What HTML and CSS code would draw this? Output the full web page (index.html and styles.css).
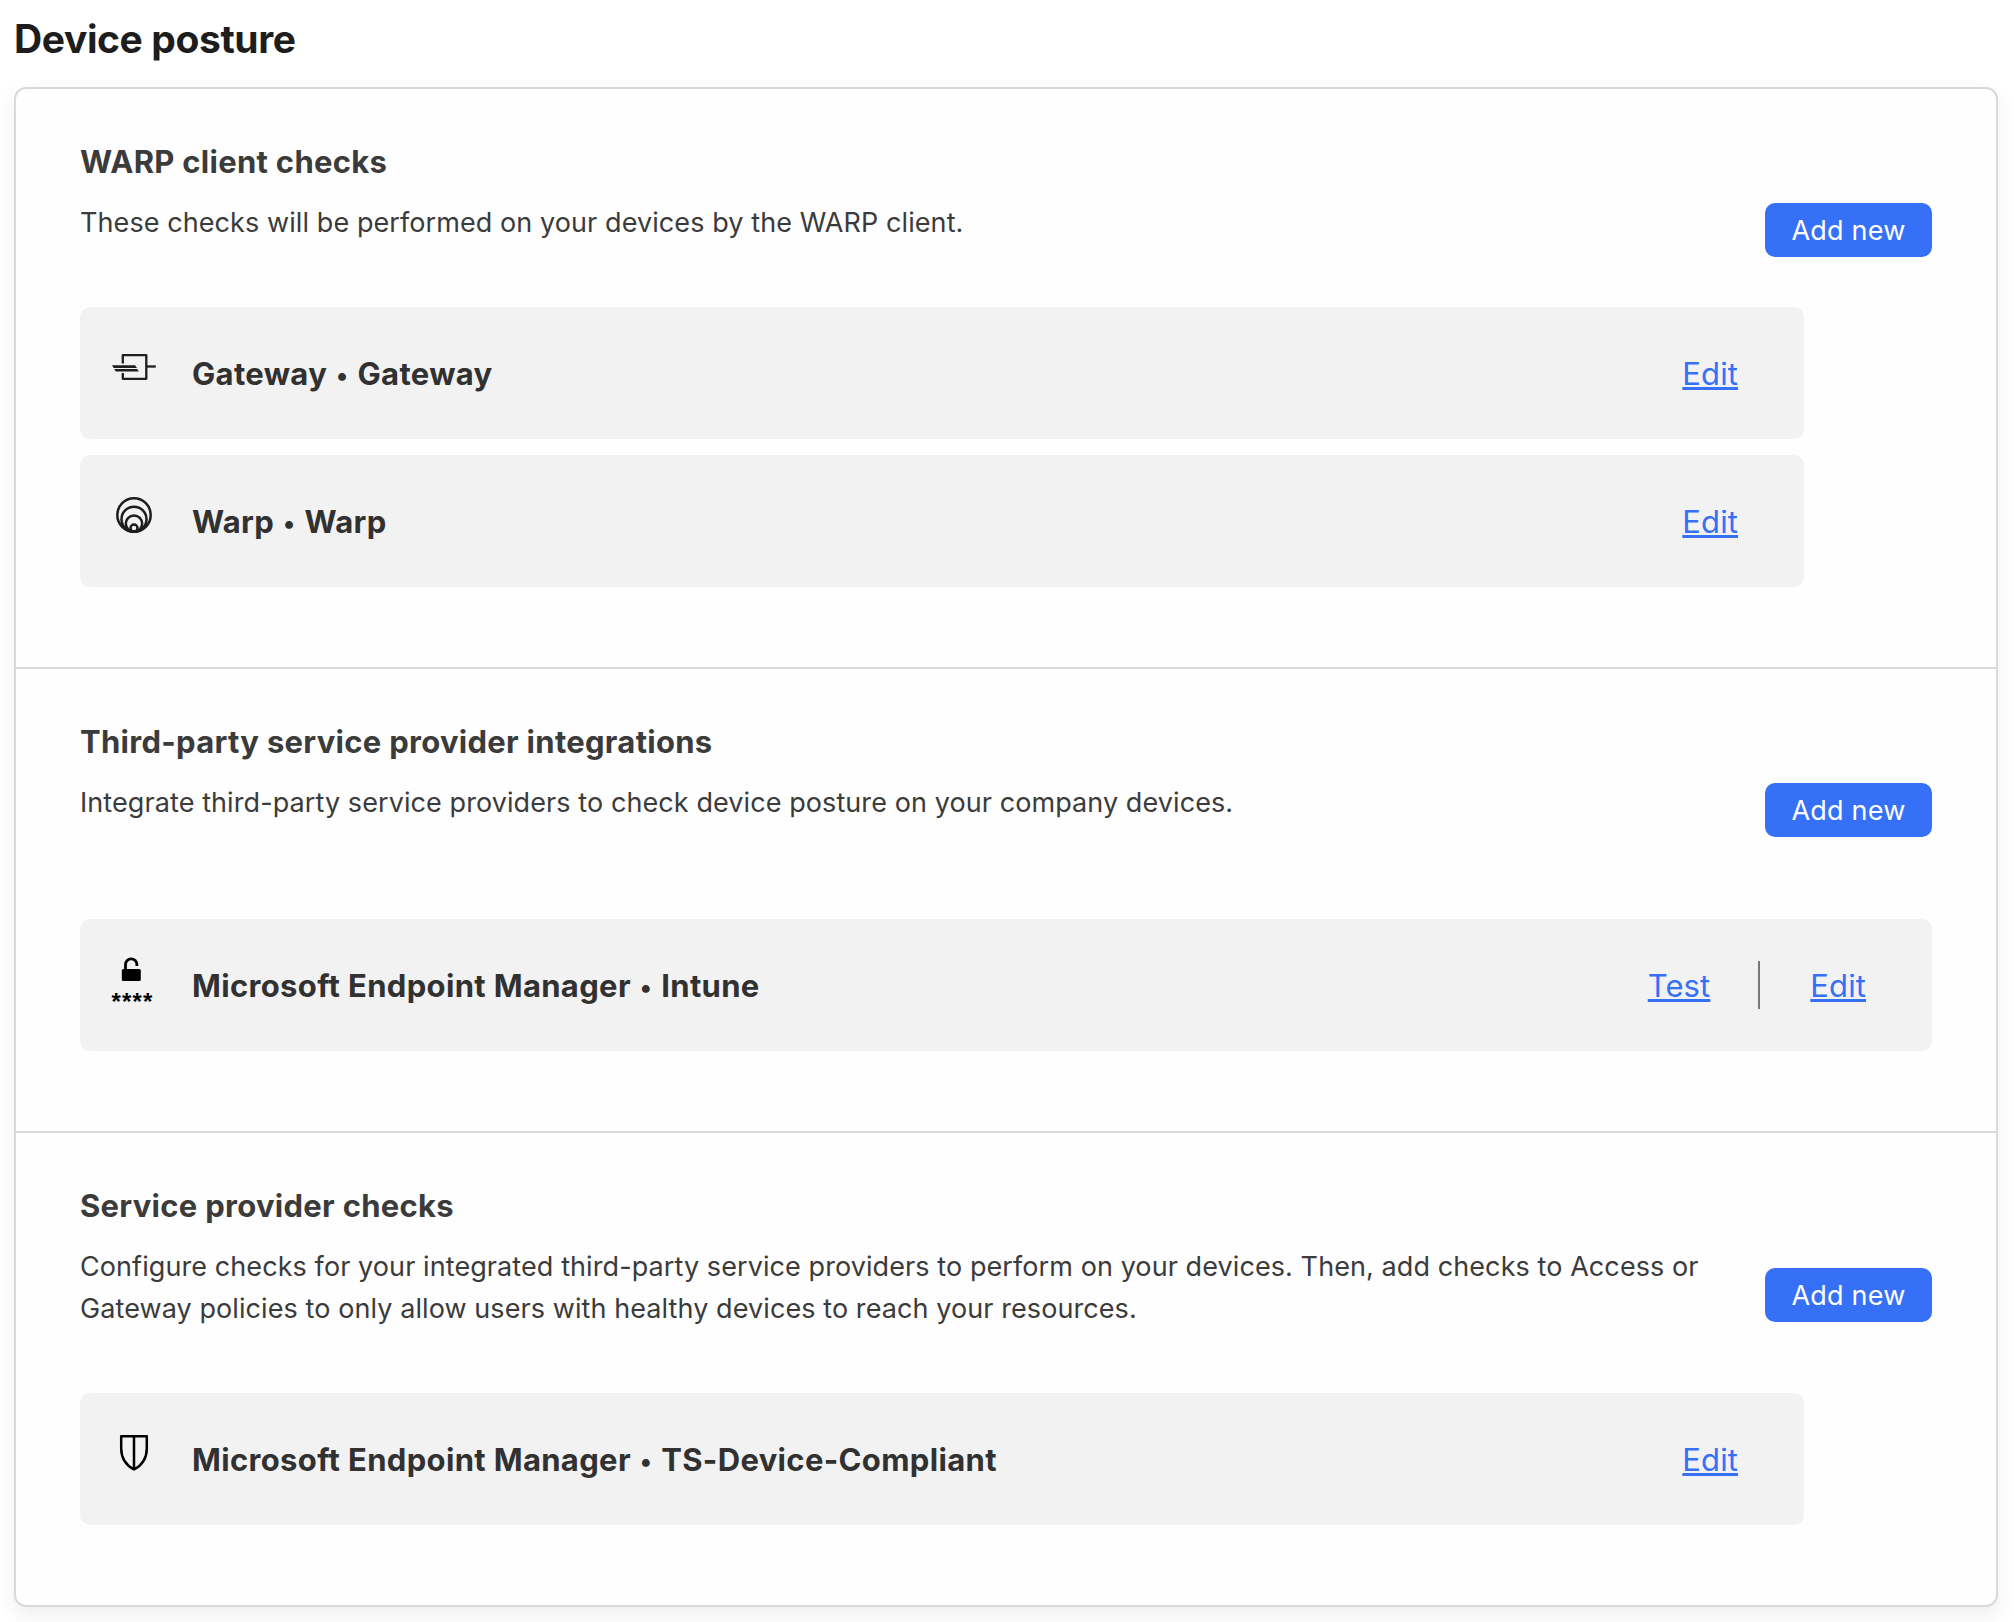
FILE: index.html
```html
<!DOCTYPE html>
<html lang="en">
<head>
<meta charset="utf-8">
<title>Device posture</title>
<link rel="stylesheet" href="styles.css">
</head>
<body>
<main class="page">
  <h1 class="page-title">Device posture</h1>
  <div class="card">
    <section class="section">
      <h2 class="section-title">WARP client checks</h2>
      <div class="intro">
        <p class="desc">These checks will be performed on your devices by the WARP client.</p>
        <button class="btn">Add new</button>
      </div>
      <ul class="rows">
        <li class="row">
          <svg class="icon" width="48" height="48" viewBox="0 0 48 48" fill="none" stroke="#1d1d1d" stroke-width="2.3">
            <path d="M12.800 20.500V12.100H36.300V35.800H12.800V30" stroke-linejoin="round"/>
            <path d="M36.500 23.500H45.800"/>
            <path d="M2 22.300H25l2 2.700H3.600zM4.200 26H27.200l1.600 2.600H5.800z" fill="#1d1d1d" stroke="none"/>
          </svg>
          <h3 class="row-title">Gateway <span class="dot">•</span> Gateway</h3>
          <a class="link" href="#">Edit</a>
        </li>
        <li class="row">
          <svg class="icon" width="48" height="48" viewBox="0 0 48 48" fill="none" stroke="#1d1d1d" stroke-width="2.500">
            <circle cx="24" cy="24" r="16.700"/>
            <circle cx="24" cy="28.300" r="12.500"/>
            <circle cx="24" cy="32.600" r="8.200"/>
            <circle cx="24" cy="37" r="3.500"/>
            <path d="M12 33Q15.500 39 21 40.500L17 39Q13 37 12 33zM36 33Q32.500 39 27 40.500L31 39Q35 37 36 33z" stroke-width="1.500"/>
          </svg>
          <h3 class="row-title">Warp <span class="dot">•</span> Warp</h3>
          <a class="link" href="#">Edit</a>
        </li>
      </ul>
    </section>

    <section class="section">
      <h2 class="section-title">Third-party service provider integrations</h2>
      <div class="intro">
        <p class="desc">Integrate third-party service providers to check device posture on your company devices.</p>
        <button class="btn">Add new</button>
      </div>
      <ul class="rows rows-wide">
        <li class="row">
          <svg class="icon" width="48" height="48" viewBox="0 0 48 48">
            <path d="M15.500 15V9.500a5.700 5.700 0 0 1 11.400 0V11" fill="none" stroke="#000" stroke-width="2.800"/>
            <rect x="11.800" y="14" width="19" height="12" rx="1.500"/>
            <text class="stars" x="1.500" y="55">****</text>
          </svg>
          <h3 class="row-title">Microsoft Endpoint Manager <span class="dot">•</span> Intune</h3>
          <a class="link" href="#">Test</a>
          <span class="bar"></span>
          <a class="link" href="#">Edit</a>
        </li>
      </ul>
    </section>

    <section class="section">
      <h2 class="section-title">Service provider checks</h2>
      <div class="intro">
        <p class="desc">Configure checks for your integrated third-party service providers to perform on your devices. Then, add checks to Access or<br>Gateway policies to only allow users with healthy devices to reach your resources.</p>
        <button class="btn">Add new</button>
      </div>
      <ul class="rows">
        <li class="row">
          <svg class="icon" width="48" height="48" viewBox="0 0 48 48" fill="none" stroke="#000" stroke-width="2.500" stroke-linejoin="round">
            <path d="M11.200 7.300H36.800V19.500C36.800 29 31.500 36.500 24 40.500C16.500 36.500 11.200 29 11.200 19.500ZM24 7.300V40.500"/>
          </svg>
          <h3 class="row-title">Microsoft Endpoint Manager <span class="dot">•</span> TS-Device-Compliant</h3>
          <a class="link" href="#">Edit</a>
        </li>
      </ul>
    </section>
  </div>
</main>
</body>
</html>
```
FILE: styles.css
```css
* {
  box-sizing: border-box;
  margin: 0;
  padding: 0;
}

body {
  background: #fff;
  color: #3b3b3b;
  font-family: Inter, "Liberation Sans", sans-serif;
  overflow: hidden;
}

.page {
  padding: 15px 16px 15px 14px;
}

.page-title {
  height: 72px;
  color: #1d1d1d;
  font-size: 39px;
  font-weight: 700;
  letter-spacing: -0.4px;
  line-height: 48px;
}

.card {
  border: 2px solid #d9d9d9;
  border-radius: 12px;
  background: #fefefe;
  box-shadow: 0 8px 20px rgba(0, 20, 10, 0.07);
}

.section {
  padding: 49px 64px 80px;
}

.section + .section {
  border-top: 2px solid #d9d9d9;
}

.section-title {
  margin-bottom: 15px;
  font-size: 31px;
  font-weight: 700;
  letter-spacing: 0.29px;
  line-height: 48px;
}

.intro {
  display: flex;
  align-items: center;
  justify-content: space-between;
}

.desc {
  margin: 1px 0 -1px;
  font-size: 27px;
  letter-spacing: 0.084px;
  line-height: 42px;
  white-space: nowrap;
}

.btn {
  flex: none;
  width: 167px;
  height: 54px;
  margin: 1px 0 -14px;
  padding-top: 1px;
  border: 0;
  border-radius: 10px;
  background: #3670f7;
  color: #fff;
  font: 400 27px/53px Inter, "Liberation Sans", sans-serif;
  letter-spacing: 0.2px;
}

.rows {
  display: grid;
  gap: 16px;
  width: 1724px;
  margin-top: 64px;
  list-style: none;
}

.rows-wide {
  width: auto;
  margin-top: 96px;
}

.row {
  display: flex;
  align-items: center;
  height: 132px;
  padding: 0 66px 0 30px;
  border-radius: 10px;
  background: #f2f2f2;
}

.icon {
  flex: none;
  margin: 0 34px 12px 0;
  overflow: visible;
}

.stars {
  font-family: "Liberation Sans", sans-serif;
  font-size: 24px;
  font-weight: 700;
  letter-spacing: 1.2px;
}

.row-title {
  flex: 1;
  padding-top: 2px;
  color: #313131;
  font-size: 31px;
  font-weight: 700;
  letter-spacing: 0.34px;
  line-height: 48px;
}

.dot {
  margin: 0 1px;
  font-size: 25px;
  font-weight: 600;
  line-height: 1;
  vertical-align: 1.5px;
}

.link {
  padding-top: 2px;
  color: #3670f7;
  font-size: 31px;
  letter-spacing: 0.1px;
  line-height: 48px;
  text-decoration: underline;
  text-decoration-thickness: 3px;
  text-decoration-skip-ink: none;
  text-underline-offset: 2px;
}

.bar {
  width: 2px;
  height: 48px;
  margin: 0 50px 0 48px;
  background: #777;
}
```
